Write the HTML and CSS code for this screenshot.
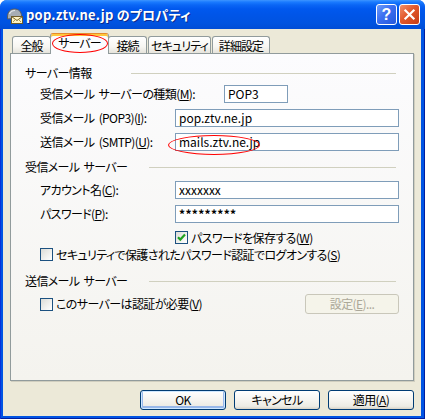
FILE: index.html
```html
<!DOCTYPE html>
<html lang="ja">
<head>
<meta charset="utf-8">
<title>pop.ztv.ne.jp のプロパティ</title>
<link rel="stylesheet" href="styles.css">
</head>
<body>
<div class="window">
  <div class="titlebar">
    <svg class="app-icon" width="17" height="17" viewBox="0 0 17 17">
      <path d="M1.5 10 C1.5 4.5 4.5 2 8.5 2 C12.5 2 15.5 4.5 15.5 9 L15.5 11 L1.5 12 Z" fill="#A7ADB4" stroke="#555B62" stroke-width="1"/>
      <path d="M3.5 7 C4.5 4.5 6.5 3.5 9 3.5" fill="none" stroke="#E4E7EA" stroke-width="1.2"/>
      <rect x="5.5" y="9.5" width="11" height="7" fill="#FFF4C4" stroke="#6E5C2A"/>
      <polyline points="5.5,9.5 11,13.5 16.5,9.5" fill="none" stroke="#6E5C2A"/>
      <line x1="7" y1="15" x2="9.5" y2="12.5" stroke="#B49A4C"/>
      <line x1="15" y1="15" x2="12.5" y2="12.5" stroke="#B49A4C"/>
    </svg>
    <div class="title">pop.ztv.ne.jp のプロパティ</div>
    <div class="cap-btn help">?</div>
    <div class="cap-btn close">
      <svg width="21" height="21" viewBox="0 0 21 21"><path d="M6 6 L15 15 M15 6 L6 15" stroke="#fff" stroke-width="2.4" stroke-linecap="square"/></svg>
    </div>
  </div>
  <div class="frame">
    <div class="client">
      <div class="tabs">
        <div class="tab w39">全般</div>
        <div class="tab selected">サーバー<span class="ring ring-tab"></span></div>
        <div class="tab w39">接続</div>
        <div class="tab w63">セキュリティ</div>
        <div class="tab w58">詳細設定</div>
      </div>
      <div class="panel">
        <div class="group-head"><span class="caption c1">サーバー情報</span><i class="rule"></i></div>
        <div class="row r1"><span class="label">受信メール サーバーの種類(<u>M</u>):</span><div class="field short">POP3</div></div>
        <div class="row r2"><span class="label">受信メール (POP3)(<u>I</u>):</span><div class="field">pop.ztv.ne.jp</div></div>
        <div class="row r2"><span class="label">送信メール (SMTP)(<u>U</u>):</span><div class="field">mails.ztv.ne.jp</div></div>

        <div class="group-head g2"><span class="caption c2">受信メール サーバー</span><i class="rule"></i></div>
        <div class="row r3"><span class="label">アカウント名(<u>C</u>):</span><div class="field">xxxxxxx</div></div>
        <div class="row r2"><span class="label">パスワード(<u>P</u>):</span><div class="field pw">*********</div></div>
        <div class="check-row save"><span class="box checked"><svg width="11" height="11" viewBox="0 0 11 11"><polyline points="2,5.2 4.3,7.6 9,2.6" fill="none" stroke="#21A121" stroke-width="2.2"/></svg></span><span>パスワードを保存する(<u>W</u>)</span></div>
        <div class="check-row spa"><span class="box"></span><span>セキュリティで保護されたパスワード認証でログオンする(<u>S</u>)</span></div>

        <div class="group-head g3"><span class="caption c2">送信メール サーバー</span><i class="rule"></i></div>
        <div class="auth-row">
          <div class="check-row"><span class="box"></span><span>このサーバーは認証が必要(<u>V</u>)</span></div>
          <div class="btn disabled">設定(<u>E</u>)...</div>
        </div>
        <span class="ring ring-smtp"></span>
      </div>
      <div class="buttons">
        <div class="btn default">OK</div>
        <div class="btn">キャンセル</div>
        <div class="btn">適用(<u>A</u>)</div>
      </div>
    </div>
  </div>
</div>
</body>
</html>
```
FILE: styles.css
```css
html, body {
  margin: 0;
  padding: 0;
}
body {
  width: 425px;
  height: 419px;
  overflow: hidden;
  background: #ffffff;
  font-family: "Noto Sans CJK JP", "Noto Sans", sans-serif;
  font-size: 12px;
  font-feature-settings: "palt" 1;
  letter-spacing: -0.6px;
  word-spacing: 2px;
  color: #000;
}
u { text-decoration: underline; text-underline-offset: 1px; }

.window {
  width: 425px;
  height: 419px;
  display: flex;
  flex-direction: column;
  border-radius: 7px 7px 0 0;
  overflow: hidden;
  background: #0054E3;
}

.titlebar {
  height: 29px;
  flex: none;
  display: flex;
  align-items: center;
  padding: 0 5px 0 6px;
  background: linear-gradient(#3D95FF 0, #1A7BFF 2px, #0A66F5 5px, #0058EE 9px, #0055E8 50%, #0053E0 80%, #004DD6 100%);
  box-sizing: border-box;
}
.app-icon { flex: none; margin-top: 1px; }
.title {
  flex: 1;
  margin-left: 3px;
  color: #fff;
  font-weight: bold;
  font-size: 13px;
  letter-spacing: 0.2px;
  word-spacing: 0;
  text-shadow: 1px 1px 0 #0A2A8C;
}
.cap-btn {
  width: 21px;
  height: 21px;
  box-sizing: border-box;
  border: 1px solid #fff;
  border-radius: 3px;
  margin-left: 2px;
  display: flex;
  align-items: center;
  justify-content: center;
}
.help {
  background: linear-gradient(135deg, #6E9CFA 0%, #3C6FF0 45%, #2458DC 100%);
  color: #fff;
  font-family: "Liberation Sans", sans-serif;
  font-weight: bold;
  font-size: 16px;
  line-height: 19px;
  letter-spacing: 0;
}
.close {
  background: linear-gradient(135deg, #F0906C 0%, #E2582C 45%, #C53C16 100%);
}
.close svg { display: block; }

.frame {
  flex: 1;
  padding: 0 4px 3px 3px;
  background: #0054E3;
  box-shadow: inset 1px 0 #0831D9, inset -1px 0 #001EA0, inset 0 -1px #001EA0;
  display: flex;
}
.client {
  flex: 1;
  background: #ECE9D8;
  display: flex;
  flex-direction: column;
}

/* tabs */
.tabs {
  display: flex;
  align-items: flex-end;
  height: 20px;
  margin: 4px 7px 0 7px;
  padding-left: 2px;
  position: relative;
  z-index: 2;
}
.tab {
  height: 17px;
  box-sizing: border-box;
  border: 1px solid #919B9C;
  border-bottom: none;
  border-radius: 3px 3px 0 0;
  background: linear-gradient(#FFFFFF 0%, #F7F6F2 60%, #E6E4DC 100%);
  margin-right: 1px;
  display: flex;
  align-items: center;
  justify-content: center;
  font-size: 12px;
  line-height: 14px;
  letter-spacing: -0.9px;
  padding-top: 1px;
  white-space: nowrap;
  flex: none;
}
.w39 { width: 39px; }
.w63 { width: 63px; }
.w58 { width: 58px; }
.tab.selected {
  position: relative;
  width: 59px;
  height: 21px;
  margin: 0 -1px -1px -2px;
  background: #FCFCFE;
  border-top-color: #E68B2C;
  box-shadow: inset 0 2px #FFC83C;
  padding-top: 0;
  padding-bottom: 2px;
  z-index: 3;
}

/* panel */
.panel {
  position: relative;
  margin: 0 7px;
  height: 328px;
  box-sizing: border-box;
  border: 1px solid #919B9C;
  background: linear-gradient(#FCFCFE, #F4F3EE);
  padding: 12px 14px 0 14px;
  box-shadow: 1px 1px 0 #D0CEBF;
}
.group-head {
  display: flex;
  align-items: center;
  height: 14px;
  line-height: 14px;
}
.caption { flex: none; white-space: nowrap; }
.c1 { width: 106px; }
.c2 { width: 124px; }
.rule {
  flex: 1;
  height: 1px;
  background: #D0D0BF;
  margin-right: 3px;
}
.g2 { margin-top: 9px; }
.g3 { margin-top: 13px; }

.row {
  display: grid;
  grid-template-columns: 135px 1fr;
  align-items: center;
  height: 18px;
  padding-left: 15px;
  margin-top: 6px;
}
.r1 { margin-top: 5px; }
.r3 { margin-top: 7px; }
.label { white-space: nowrap; line-height: 14px; }
.field {
  height: 18px;
  box-sizing: border-box;
  border: 1px solid #7F9DB9;
  background: #fff;
  padding-left: 3px;
  line-height: 16px;
  font-size: 12px;
  letter-spacing: 0;
}
.field.short {
  width: 64px;
  margin-left: 49px;
}
.field.pw { font-weight: bold; letter-spacing: 0.3px; }

.check-row {
  display: flex;
  align-items: center;
  height: 13px;
  line-height: 14px;
  white-space: nowrap;
}
.check-row.save { margin-top: 8px; padding-left: 150px; }
.check-row.spa { margin-top: 4px; padding-left: 15px; }
.box {
  width: 13px;
  height: 13px;
  box-sizing: border-box;
  border: 1px solid #1C5180;
  background: linear-gradient(135deg, #DCDCD7 0%, #F2F2EF 60%, #FFFFFF 100%);
  margin-right: 3px;
  flex: none;
  display: flex;
  align-items: center;
  justify-content: center;
}
.box svg { display: block; }

.auth-row {
  display: flex;
  align-items: center;
  justify-content: space-between;
  height: 20px;
  margin-top: 6px;
  padding-left: 15px;
}

.btn {
  width: 86px;
  height: 20px;
  box-sizing: border-box;
  border: 1px solid #003C74;
  border-radius: 3px;
  background: linear-gradient(#FFFFFF 0%, #F5F4F0 50%, #ECEBE4 85%, #D8D2C6 100%);
  display: flex;
  align-items: center;
  justify-content: center;
  line-height: 14px;
  white-space: nowrap;
}
.btn.default {
  box-shadow: inset 0 0 0 1px #CEE7FF, inset 0 -1px 0 2px #98B8EA;
}
.btn.disabled {
  width: 94px;
  border-color: #C9C7BA;
  background: #F5F4EA;
  color: #ACA899;
}

.buttons {
  display: flex;
  justify-content: flex-end;
  gap: 8px;
  padding: 9px 7px 0 0;
}

/* red hand-drawn marks */
.ring {
  position: absolute;
  border: 1px solid #FF0000;
  border-radius: 50%;
  pointer-events: none;
}
.ring-tab {
  left: 1px;
  top: 0;
  width: 54px;
  height: 17px;
}
.ring-smtp {
  left: 157px;
  top: 81px;
  width: 90px;
  height: 18px;
}
```
